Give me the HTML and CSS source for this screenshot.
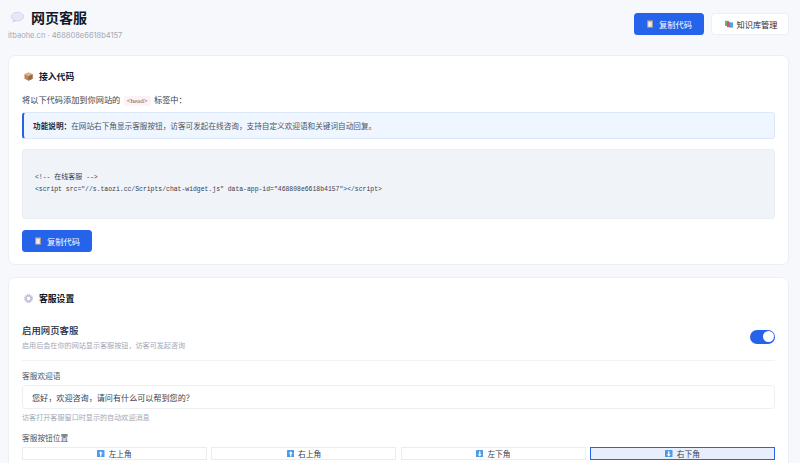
FILE: index.html
```html
<!DOCTYPE html>
<html lang="zh-CN">
<head>
    <meta charset="UTF-8">
    <meta name="viewport" content="width=device-width, initial-scale=1.0">
    <title>网页客服</title>
    <link rel="stylesheet" href="styles.css">
</head>
<body>
    <header class="page-header">
        <div>
            <h1 class="page-title">
                <svg class="icon-title" viewBox="0 0 16 14">
                    <ellipse cx="8.5" cy="6" rx="7" ry="5" fill="#ebe5f8" stroke="#cfc4ea" stroke-width="0.8"/>
                    <path d="M4 9.5 L2.5 13 L7.5 10.8 Z" fill="#d9cff0"/>
                </svg>
                网页客服
            </h1>
            <p class="page-sub">itbaohe.cn · 468808e6618b4157</p>
        </div>
        <div class="header-controls">
            <button class="btn btn-primary btn-top">
                <svg class="icon" viewBox="0 0 10 10"><rect x="1.5" y="0.5" width="7" height="9" fill="#c9a88e"/><rect x="2.8" y="2" width="4.4" height="6.4" fill="#f1ece8"/><rect x="3.5" y="0" width="3" height="1.5" fill="#8c8a92"/></svg>
                复制代码
            </button>
            <button class="btn btn-light">
                <svg class="icon" viewBox="0 0 10 10"><rect x="0" y="1" width="5" height="6.5" fill="#62b96c"/><rect x="2.5" y="2.5" width="4" height="6.5" fill="#d8506e"/><rect x="5.5" y="3" width="4.5" height="6.5" fill="#45a8e4"/></svg>
                知识库管理
            </button>
        </div>
    </header>

    <section class="card card-code">
        <h2 class="card-title">
            <svg class="icon-card" viewBox="0 0 10 10"><path d="M5 0.5 L9.5 2.6 V7.6 L5 9.8 L0.5 7.6 V2.6 Z" fill="#bd8656"/><path d="M0.5 2.6 L5 4.8 L9.5 2.6 L5 0.5 Z" fill="#dcb48c"/><path d="M5 4.8 V9.8 L9.5 7.6 V2.6 Z" fill="#9a6a42"/></svg>
            接入代码
        </h2>
        <p class="card-intro">将以下代码添加到你网站的 <code class="tag">&lt;head&gt;</code> 标签中：</p>
        <div class="info-box"><strong>功能说明：</strong>在网站右下角显示客服按钮，访客可发起在线咨询，支持自定义欢迎语和关键词自动回复。</div>
        <pre class="code-box"><span>&lt;!-- <span class="code-cjk">在线客服</span> --&gt;</span><span>&lt;script src="//s.taozi.cc/Scripts/chat-widget.js" data-app-id="468808e6618b4157"&gt;&lt;/script&gt;</span></pre>
        <button class="btn btn-primary">
            <svg class="icon" viewBox="0 0 10 10"><rect x="1.5" y="0.5" width="7" height="9" fill="#c9a88e"/><rect x="2.8" y="2" width="4.4" height="6.4" fill="#f1ece8"/><rect x="3.5" y="0" width="3" height="1.5" fill="#8c8a92"/></svg>
            复制代码
        </button>
    </section>

    <section class="card card-settings">
        <h2 class="card-title">
            <svg class="icon-card" viewBox="0 0 10 10"><circle cx="5" cy="5" r="3" fill="none" stroke="#c3b9dc" stroke-width="1.8"/><circle cx="5" cy="5" r="4.4" fill="none" stroke="#b4a9d0" stroke-width="1.1" stroke-dasharray="1.3 1"/></svg>
            客服设置
        </h2>
        <div class="setting-row">
            <div>
                <div class="setting-name">启用网页客服</div>
                <div class="hint">启用后会在你的网站显示客服按钮，访客可发起咨询</div>
            </div>
            <div class="toggle"><span class="toggle-knob"></span></div>
        </div>
        <label class="field-label">客服欢迎语</label>
        <div class="text-input">您好，欢迎咨询，请问有什么可以帮到您的？</div>
        <div class="hint hint-field">访客打开客服窗口时显示的自动欢迎消息</div>
        <label class="field-label">客服按钮位置</label>
        <div class="position-grid">
            <button class="pos-btn"><svg class="icon-arrow" viewBox="0 0 8 8"><rect width="8" height="8" rx="0.8" fill="#4c9be8"/><path d="M4 1.2 L6.2 3.6 H4.7 V6.8 H3.3 V3.6 H1.8 Z" fill="#fff"/></svg>左上角</button>
            <button class="pos-btn"><svg class="icon-arrow" viewBox="0 0 8 8"><rect width="8" height="8" rx="0.8" fill="#4c9be8"/><path d="M4 1.2 L6.2 3.6 H4.7 V6.8 H3.3 V3.6 H1.8 Z" fill="#fff"/></svg>右上角</button>
            <button class="pos-btn"><svg class="icon-arrow" viewBox="0 0 8 8"><rect width="8" height="8" rx="0.8" fill="#4c9be8"/><path d="M4 6.8 L6.2 4.4 H4.7 V1.2 H3.3 V4.4 H1.8 Z" fill="#fff"/></svg>左下角</button>
            <button class="pos-btn pos-active"><svg class="icon-arrow" viewBox="0 0 8 8"><rect width="8" height="8" rx="0.8" fill="#4c9be8"/><path d="M4 6.8 L6.2 4.4 H4.7 V1.2 H3.3 V4.4 H1.8 Z" fill="#fff"/></svg>右下角</button>
        </div>
    </section>
</body>
</html>
```

FILE: styles.css
```css
* {
    margin: 0;
    padding: 0;
    box-sizing: border-box;
}

html {
    height: 100%;
    overflow: hidden;
}

body {
    font-family: "Inter", "Noto Sans CJK SC", sans-serif;
    background-color: #f6f8fc;
    color: #1f2937;
    height: 100%;
    overflow: hidden;
    padding: 0 11px 0 8px;
}

.page-header {
    display: flex;
    justify-content: space-between;
    align-items: flex-start;
    height: 55px;
    padding-top: 8px;
}

.page-title {
    display: flex;
    align-items: center;
    gap: 7px;
    font-size: 14px;
    line-height: 19px;
    font-weight: 700;
    color: #111827;
    padding-left: 2px;
}

.icon-title {
    width: 14px;
    height: 13px;
}

.page-sub {
    margin-top: 3px;
    font-size: 7.5px;
    line-height: 12px;
    color: #a3a9b5;
}

.header-controls {
    display: flex;
    gap: 7px;
    padding-top: 4.5px;
}

.btn {
    display: inline-flex;
    align-items: center;
    justify-content: center;
    gap: 5px;
    height: 21.5px;
    width: 70px;
    border-radius: 3.5px;
    font-family: inherit;
    font-size: 8.2px;
    cursor: pointer;
}

.btn-primary {
    background-color: #2563eb;
    border: none;
    color: #fff;
}

.btn-top {
    height: 22.5px;
}

.btn-light {
    width: 78px;
    height: 22px;
    margin-top: 0.5px;
    padding-left: 2px;
    gap: 4px;
    background-color: #fff;
    border: 1px solid #eceff4;
    color: #1f2937;
}

.icon {
    width: 8px;
    height: 8px;
}

.card {
    background-color: #fff;
    border: 1px solid #eceff4;
    border-radius: 7px;
    padding: 0 13px;
}

.card-code {
    height: 210px;
    margin-bottom: 12px;
}

.card-settings {
    height: 220px;
}

.card-title {
    display: flex;
    align-items: center;
    gap: 6px;
    height: 38px;
    padding-top: 3px;
    padding-left: 2px;
    font-size: 8.8px;
    font-weight: 700;
    color: #111827;
}

.card-settings .card-title {
    height: 41px;
    padding-top: 0;
}

.icon-card {
    width: 9px;
    height: 9px;
}

.card-intro {
    font-size: 8.2px;
    line-height: 12px;
    color: #374151;
}

.tag {
    font-family: "Liberation Serif", serif;
    font-size: 7px;
    line-height: 1;
    color: #6b5a66;
    background-color: #fdf2f6;
    border-radius: 2px;
    padding: 1px 3px;
    margin: 0 1px;
}

.info-box {
    display: flex;
    align-items: center;
    margin-top: 5.5px;
    height: 27px;
    background-color: #eff6ff;
    border: 1px solid #dbe7fb;
    border-left: 2px solid #2563eb;
    border-radius: 3.5px;
    padding-left: 9px;
    font-size: 7.63px;
    color: #4b5563;
}

.info-box strong {
    color: #1f2937;
    font-weight: 700;
}

.code-box {
    display: flex;
    flex-direction: column;
    justify-content: center;
    margin: 10px 0;
    height: 70.5px;
    padding-left: 12px;
    background-color: #f0f3f8;
    border: 1px solid #e8ebf1;
    border-radius: 3.5px;
    font-family: "Liberation Mono", "Noto Sans CJK SC", monospace;
    font-size: 6.43px;
    line-height: 12px;
    color: #374151;
}

.code-cjk {
    font-size: 7px;
}

.setting-row {
    display: flex;
    justify-content: space-between;
    align-items: center;
    height: 42px;
    padding-bottom: 4px;
    border-bottom: 1px solid #f0f2f6;
}

.setting-name {
    font-size: 9.4px;
    line-height: 13px;
    font-weight: 500;
    color: #1f2937;
}

.hint {
    font-size: 7.1px;
    line-height: 11px;
    color: #a3a9b5;
    margin-top: 3px;
}

.toggle {
    display: flex;
    justify-content: flex-end;
    align-items: center;
    width: 25.5px;
    height: 14px;
    border-radius: 7px;
    background-color: #2563eb;
    padding-right: 1.5px;
    margin-top: -2px;
}

.toggle-knob {
    width: 11px;
    height: 11px;
    border-radius: 50%;
    background-color: #fff;
}

.field-label {
    display: block;
    margin-top: 10px;
    font-size: 7.7px;
    line-height: 11px;
    color: #4b5563;
}

.text-input {
    display: flex;
    align-items: center;
    margin-top: 3px;
    height: 24px;
    padding-left: 9px;
    background-color: #fff;
    border: 1px solid #eceff4;
    border-radius: 3.5px;
    font-size: 8.1px;
    color: #374151;
}

.hint-field {
    margin-top: 3px;
}

.position-grid {
    display: grid;
    grid-template-columns: repeat(4, 1fr);
    gap: 4.5px;
    margin-top: 3px;
}

.pos-btn {
    display: flex;
    align-items: center;
    justify-content: center;
    gap: 4px;
    height: 13px;
    background-color: #fff;
    border: 1px solid #e9ecf2;
    font-family: inherit;
    font-size: 7.7px;
    color: #374151;
    cursor: pointer;
}

.pos-active {
    background-color: #e8eefb;
    border: 1.5px solid #2563eb;
}

.icon-arrow {
    width: 7.5px;
    height: 7.5px;
}
```
